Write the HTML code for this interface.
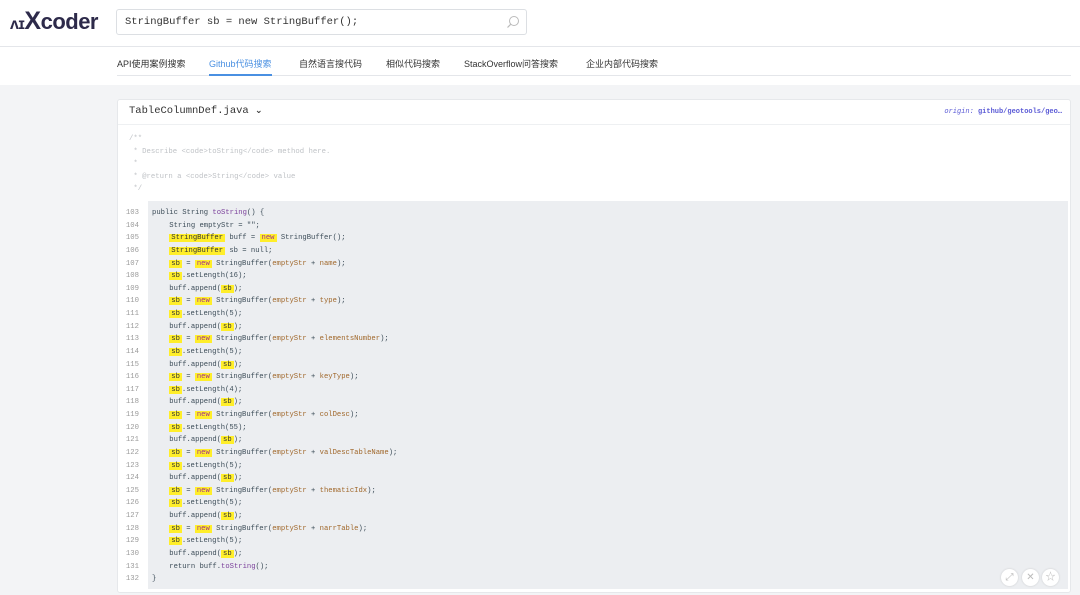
<!DOCTYPE html>
<html><head><meta charset="utf-8"><style>
*{margin:0;padding:0;box-sizing:border-box}
body{width:1080px;height:595px;overflow:hidden;background:#f3f4f6;font-family:"Liberation Sans","Noto Sans CJK SC",sans-serif;position:relative}
.hdr{position:absolute;left:0;top:0;width:1080px;height:47px;background:#fff;border-bottom:1px solid #e4e6ea}
.logo{position:absolute;left:10px;top:7px;font-size:22px;font-weight:bold;color:#2d2a4a;letter-spacing:-0.5px}
.search{position:absolute;left:116px;top:9px;width:411px;height:26px;border:1px solid #dcdfe3;border-radius:3px;font-family:"Liberation Mono",monospace;font-size:10.5px;color:#333;padding:6px 8px}
.tabs{position:absolute;left:0;top:47px;width:1080px;height:38px;background:#fff}
.tabs .line{position:absolute;left:117px;top:28px;width:954px;height:1px;background:#e4e6ea}
.tab{position:absolute;top:10px;font-size:9px;color:#333}
.tab.on{color:#4a90e2}
.tab.on:after{content:"";position:absolute;left:0;right:0;top:17px;height:2px;background:#4a90e2}
.card{position:absolute;left:117px;top:99px;width:954px;height:494px;background:#fff;border:1px solid #e6e8eb;border-radius:3px}
.ch{height:25px;border-bottom:1px solid #eef0f2;font-family:"Liberation Mono",monospace;font-size:10.5px;color:#333;padding:5px 11px}
.origin{position:absolute;right:8px;top:8px;font-family:"Liberation Mono",monospace;font-size:7px;color:#5a5ad6;font-weight:bold}
.origin i{font-weight:normal}
.cm{position:absolute;left:11px;top:33px;font-family:"Liberation Mono",monospace;font-size:7.3px;line-height:12.6px;color:#bfc2c6;white-space:pre}
.code{position:absolute;left:30px;top:101px;width:920px;height:388px;background:#eceef1}
.ln{position:absolute;left:0;top:107px;width:21px;text-align:right;font-family:"Liberation Mono",monospace;font-size:7.3px;line-height:12.62px;color:#9a9a9a;white-space:pre}
.src{position:absolute;left:34px;top:107px;font-family:"Liberation Mono",monospace;font-size:7.2px;line-height:12.62px;color:#3c4c58;white-space:pre}
.h{background:#ffee2a;color:#333;padding:0 2px}
.k{background:#ffee2a;color:#a0308a;padding:0 2px}
.v{color:#a0672a}
.p{color:#7a3f9a}
.btn{position:absolute;top:569px;width:17px;height:17px;border-radius:50%;background:#fff;box-shadow:0 0 2px rgba(0,0,0,.15);color:#bbb;font-size:10px;text-align:center;line-height:17px}
</style></head><body>
<div class="hdr">
<div class="logo"><span style="font-size:16px">ᴧɪ</span><span style="font-size:25px">X</span>coder</div>
<div class="search">StringBuffer sb = new StringBuffer();
<svg style="position:absolute;right:6px;top:5px" width="14" height="14" viewBox="0 0 14 14"><circle cx="8" cy="6" r="4.5" fill="none" stroke="#bbb" stroke-width="1"/><path d="M4.8 9.2L1.5 12.5" stroke="#bbb" stroke-width="1.2"/></svg></div>
</div>
<div class="tabs"><div class="line"></div>
<div class="tab" style="left:117px">API使用案例搜索</div>
<div class="tab on" style="left:209px">Github代码搜索</div>
<div class="tab" style="left:299px">自然语言搜代码</div>
<div class="tab" style="left:386px">相似代码搜索</div>
<div class="tab" style="left:464px">StackOverflow问答搜索</div>
<div class="tab" style="left:586px">企业内部代码搜索</div>
</div>
<div class="card">
<div class="ch">TableColumnDef.java <span style="font-family:'DejaVu Sans';font-size:9px;font-weight:bold">⌄</span></div>
<div class="origin"><i>origin:</i> github/geotools/geo…</div>
<div class="cm">/**
 * Describe &lt;code&gt;toString&lt;/code&gt; method here.
 *
 * @return a &lt;code&gt;String&lt;/code&gt; value
 */</div>
<div class="code"></div>
<div class="ln">103
104
105
106
107
108
109
110
111
112
113
114
115
116
117
118
119
120
121
122
123
124
125
126
127
128
129
130
131
132</div>
<div class="src">public String <span class="p">toString</span>() {
    String emptyStr = "";
    <span class="h">StringBuffer</span> buff = <span class="k">new</span> StringBuffer();
    <span class="h">StringBuffer</span> sb = null;
    <span class="h">sb</span> = <span class="k">new</span> StringBuffer(<span class="v">emptyStr</span> + <span class="v">name</span>);
    <span class="h">sb</span>.setLength(16);
    buff.append(<span class="h">sb</span>);
    <span class="h">sb</span> = <span class="k">new</span> StringBuffer(<span class="v">emptyStr</span> + <span class="v">type</span>);
    <span class="h">sb</span>.setLength(5);
    buff.append(<span class="h">sb</span>);
    <span class="h">sb</span> = <span class="k">new</span> StringBuffer(<span class="v">emptyStr</span> + <span class="v">elementsNumber</span>);
    <span class="h">sb</span>.setLength(5);
    buff.append(<span class="h">sb</span>);
    <span class="h">sb</span> = <span class="k">new</span> StringBuffer(<span class="v">emptyStr</span> + <span class="v">keyType</span>);
    <span class="h">sb</span>.setLength(4);
    buff.append(<span class="h">sb</span>);
    <span class="h">sb</span> = <span class="k">new</span> StringBuffer(<span class="v">emptyStr</span> + <span class="v">colDesc</span>);
    <span class="h">sb</span>.setLength(55);
    buff.append(<span class="h">sb</span>);
    <span class="h">sb</span> = <span class="k">new</span> StringBuffer(<span class="v">emptyStr</span> + <span class="v">valDescTableName</span>);
    <span class="h">sb</span>.setLength(5);
    buff.append(<span class="h">sb</span>);
    <span class="h">sb</span> = <span class="k">new</span> StringBuffer(<span class="v">emptyStr</span> + <span class="v">thematicIdx</span>);
    <span class="h">sb</span>.setLength(5);
    buff.append(<span class="h">sb</span>);
    <span class="h">sb</span> = <span class="k">new</span> StringBuffer(<span class="v">emptyStr</span> + <span class="v">narrTable</span>);
    <span class="h">sb</span>.setLength(5);
    buff.append(<span class="h">sb</span>);
    return buff.<span class="p">toString</span>();
}</div>
</div>
<div class="btn" style="left:1001px">⤢</div>
<div class="btn" style="left:1022px">✕</div>
<div class="btn" style="left:1042px">☆</div>
</body></html>
